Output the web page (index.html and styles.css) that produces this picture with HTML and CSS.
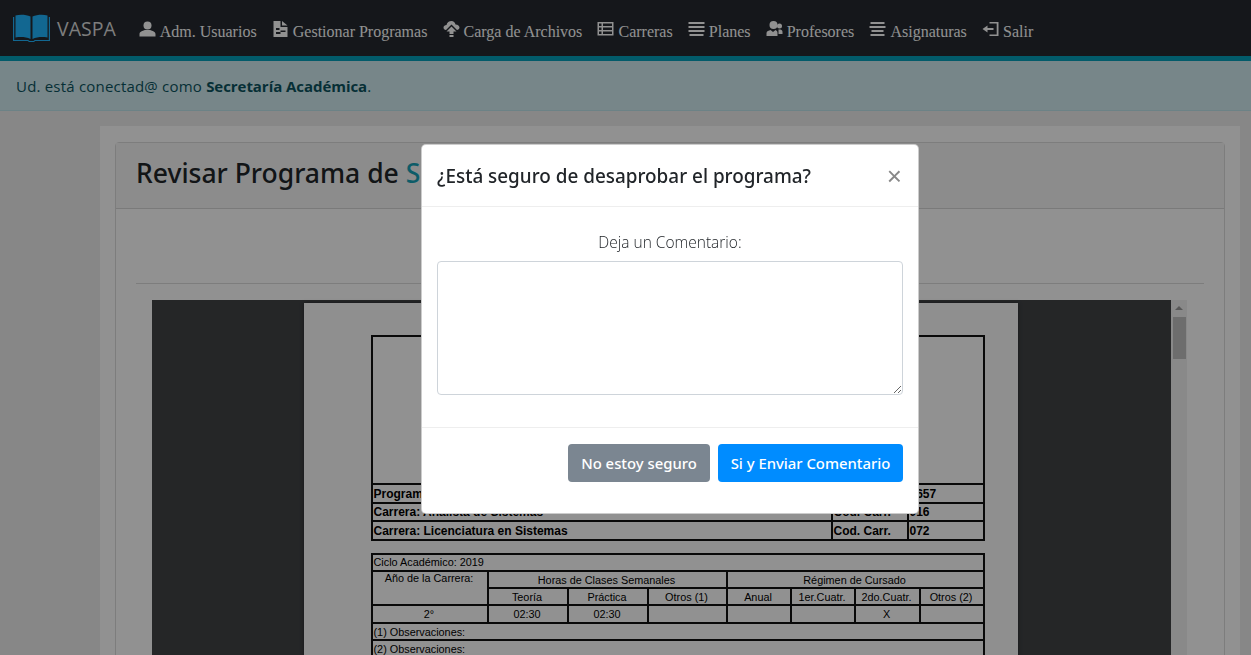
FILE: index.html
```html
<!DOCTYPE html>
<html lang="es">
<head>
<meta charset="utf-8">
<title>VASPA</title>
<link rel="stylesheet" href="styles.css">
</head>
<body>
<nav class="navbar">
  <a class="brand">
    <svg class="logo" viewBox="0 0 37 28"><path d="M2.500 1.500C7 .2 13 .5 17.500 2.500V25C13 23 8 22.500 2.500 23.500Z M19.500 2.500C24 .5 30 .2 34.500 1.500V23.500C29 22.500 24 23 19.500 25Z" fill="#20b5ff"/><path d="M.6 3V26.500H15C16 28 21 28 22 26.500H36.400V3" fill="none" stroke="#20b5ff" stroke-width="1.200"/></svg>
    <span>VASPA</span>
  </a>
  <ul class="menu">
    <li><svg class="ico" viewBox="0 0 16 16"><circle cx="8" cy="4.500" r="4"/><path d="M0 15.500V13C0 10.500 3 10 5.500 9H10.500C13 10 16 10.500 16 13V15.500Z"/></svg>Adm. Usuarios</li>
    <li><svg class="ico" viewBox="0 0 16 16"><path fill-rule="evenodd" d="M1 0H8V6H15V16H1ZM9.500 0 15 4.500H9.500ZM3.500 7V9H7V7ZM3.500 11V13H8V11H13V9.500H8V11Z"/></svg>Gestionar Programas</li>
    <li><svg class="ico" viewBox="0 0 16 16"><path d="M8 0C10 0 11.500 1.500 12 3.500 14.500 3.500 16 5 16 6.500 16 8 14.500 9 13.500 9L8 3.500 2.500 9C1 9 0 8 0 6.500 0 5 1.500 4 3 4 3.500 1.500 5.500 0 8 0ZM8 5.500 13 10.500H10V13H6V10.500H3ZM6 14H10V16H6Z"/></svg>Carga de Archivos</li>
    <li><svg class="ico" viewBox="0 0 16 16"><path fill-rule="evenodd" d="M0 1H16V14.500H0ZM1.500 2.500V5H4V2.500ZM5.500 2.500V5H14.500V2.500ZM1.500 6.500V9H4V6.500ZM5.500 6.500V9H14.500V6.500ZM1.500 10.500V13H4V10.500ZM5.500 10.500V13H14.500V10.500Z"/></svg>Carreras</li>
    <li><svg class="ico" viewBox="0 0 16 16"><path d="M0 1H16V3H0ZM0 5H16V7H0ZM0 9H16V11H0ZM1 13H15V15H1Z"/></svg>Planes</li>
    <li><svg class="ico" viewBox="0 0 16 16"><circle cx="7" cy="4" r="4"/><circle cx="13" cy="5" r="2.500"/><path d="M0 15V12C0 10 2.500 9.500 4 9L6.500 11 9 9C10 9.500 11 10 11 12V15ZM12 8.500H14C15.500 9 16 9.800 16 11V13H12Z"/></svg>Profesores</li>
    <li><svg class="ico" viewBox="0 0 16 16"><path d="M1 1H15V3H1ZM0 5H16V7H0ZM2 9H14V11H2ZM1 13H15V15H1Z"/></svg>Asignaturas</li>
    <li><svg class="ico" viewBox="0 0 16 16"><path d="M7 1H16V15H7V13.500H14.200V2.500H7ZM5 4.500V7H11V9H5V11.500L0 8Z"/></svg>Salir</li>
  </ul>
</nav>
<div class="notice"><span class="notice-text">Ud. está conectad@ como </span><strong>Secretaría Académica</strong>.</div>
<main class="wrap">
  <section class="card">
    <header class="card-head"><h1>Revisar Programa de <span class="accent">Sistemas Operativos</span></h1></header>
    <div class="card-body">
      <div class="spacer"></div>
      <hr class="rule">
      <div class="viewer">
        <div class="stage">
          <div class="sheet">
            <table class="doc doc-head">
              <colgroup><col class="c1"><col class="c2"><col class="c3"></colgroup>
              <tr class="tall"><td colspan="3"></td></tr>
              <tr><th>Programa: Sistemas Operativos</th><th>Cód. Mat.</th><th>0657</th></tr>
              <tr><th>Carrera: Analista de Sistemas</th><th>Cod. Carr.</th><th>016</th></tr>
              <tr><th>Carrera: Licenciatura en Sistemas</th><th>Cod. Carr.</th><th>072</th></tr>
            </table>
            <table class="doc doc-data">
              <colgroup><col class="d1"><col class="d2"><col class="d2"><col class="d3"><col class="d4"><col class="d5"><col class="d6"><col class="d7"></colgroup>
              <tr><td colspan="8" class="left">Ciclo Académico: 2019</td></tr>
              <tr><td rowspan="2" class="top">Año de la Carrera:</td><td colspan="3">Horas de Clases Semanales</td><td colspan="4">Régimen de Cursado</td></tr>
              <tr><td>Teoría</td><td>Práctica</td><td>Otros (1)</td><td>Anual</td><td>1er.Cuatr.</td><td>2do.Cuatr.</td><td>Otros (2)</td></tr>
              <tr><td>2°</td><td>02:30</td><td>02:30</td><td></td><td></td><td></td><td>X</td><td></td></tr>
              <tr><td colspan="8" class="left">(1) Observaciones:</td></tr>
              <tr><td colspan="8" class="left">(2) Observaciones:</td></tr>
            </table>
          </div>
        </div>
        <div class="scrollbar"><span class="arrow"></span><span class="thumb"></span></div>
      </div>
    </div>
  </section>
</main>
<div class="backdrop"></div>
<div class="modal">
  <div class="modal-head"><h2>¿Está seguro de desaprobar el programa?</h2><span class="close">×</span></div>
  <div class="modal-body">
    <label class="field-label" for="comentario">Deja un Comentario:</label>
    <textarea id="comentario" class="field"></textarea>
  </div>
  <div class="modal-foot">
    <button class="btn btn-gray">No estoy seguro</button>
    <button class="btn btn-blue">Si y Enviar Comentario</button>
  </div>
</div>
</body>
</html>
```
FILE: styles.css
```css
* { box-sizing: border-box; }
html, body { height: 100%; overflow: hidden; }
body { margin: 0; background: #eee; font-family: "Open Sans", "Noto Sans", sans-serif; color: #212529; }

.navbar { display: flex; align-items: center; height: 61px; padding: 0 0 0 13px; background: #252a31; border-bottom: 5px solid #05a0bb; }
.brand { display: flex; align-items: center; font-size: 19.500px; font-family: "Open Sans", sans-serif; }
.logo { width: 37px; height: 28px; margin-right: 7px; }
.brand span { color: #dcdcdc; }
.menu { display: flex; list-style: none; margin: 8px 0 0 23px; padding: 0; gap: 15.150px; font-family: "Liberation Serif", serif; font-size: 16px; }
.menu li { display: flex; align-items: center; white-space: nowrap; color: #fff; }
.ico { width: 17px; height: 16px; margin-right: 4px; margin-top: -6px; fill: currentColor; }

.notice { height: 50px; padding: 15px 16px 0; font-size: 15px; line-height: 20px; background: #d1ecf1; border-bottom: 1px solid #bee5eb; color: #0c5460; }
.notice-text { letter-spacing: .2px; }
.notice strong { font-weight: 700; letter-spacing: -.05px; }

.wrap { margin: 15px 11px 0 100px; padding: 16px 15px; background: #fff; }
.card { border: 1px solid #dcdcdc; border-radius: 4px; background: #fff; }
.card-head { height: 66px; padding: 0 20px 3px; display: flex; align-items: center; background: #f6f6f6; border-bottom: 1px solid #d6d6d6; }
h1 { margin: 0; font-family: "Noto Sans", sans-serif; font-size: 26.500px; font-weight: 500; line-height: 1.2; color: #212529; white-space: nowrap; }
.accent { color: #17a2b8; }
.card-body { padding: 0 20px; }
.spacer { height: 74px; }
.rule { margin: 0 0 16px; border: 0; border-top: 1px solid #dcdcdc; }

.viewer { display: flex; height: 800px; margin: 0 17px 0 16px; background: #414346; }
.stage { flex: 1; min-width: 0; padding: 3px 2px 0 0; display: flex; justify-content: center; }
.sheet { width: 714px; height: 100%; padding: 32px 33px 0 67px; background: #fbfbfb; box-shadow: 0 0 4px rgba(0,0,0,.4); }
.scrollbar { width: 16px; display: flex; flex-direction: column; align-items: center; background: #f1f1f1; }
.arrow { width: 0; height: 0; margin-top: 6px; border: 4px solid transparent; border-top: 0; border-bottom: 4px solid #999; }
.thumb { width: 13px; height: 42px; margin-top: 7px; background: #c0c0c0; }

.doc { width: 612px; table-layout: fixed; border-collapse: collapse; font-family: "Liberation Sans", sans-serif; font-size: 10.850px; color: #000; background: #fff; }
.doc td, .doc th { border: 2px solid #111; padding: 0 2px 0 1px; overflow: hidden; white-space: nowrap; }
.doc-head { height: 204px; font-size: 12px; }
.doc-head th { text-align: left; height: 18.500px; padding-top: 1px; }
.tall td { height: 148px; }
.c1 { width: 460px; } .c2 { width: 76px; } .c3 { width: 76px; }
.doc-data { margin-top: 12px; }
.doc-data td { height: 17.300px; text-align: center; padding-top: .5px; }
.doc-data td.left { text-align: left; }
.doc-data td.top { vertical-align: top; }
.d1 { width: 116px; } .d2 { width: 80px; } .d3 { width: 79px; } .d4 { width: 64px; } .d5 { width: 64px; } .d6 { width: 65px; } .d7 { width: 64px; }

.backdrop { position: fixed; inset: 0; background: rgba(0,0,0,.43); }
.modal { position: absolute; left: 421px; top: 144px; width: 498px; height: 370px; background: #fff; border: 1px solid rgba(0,0,0,.2); border-radius: 5px; display: flex; flex-direction: column; }
.modal-head { display: flex; justify-content: space-between; align-items: flex-start; height: 62px; padding: 17px 16px 0 15px; border-bottom: 1px solid #eee; }
h2 { margin: 0; font-family: "Noto Sans", sans-serif; font-size: 18.900px; font-weight: 500; line-height: 1.5; color: #212529; white-space: nowrap; }
.close { margin-top: -1px; font-family: "Liberation Sans", sans-serif; font-size: 26px; line-height: 30px; color: #888; font-weight: 400; }
.modal-body { flex: 1; display: flex; flex-direction: column; padding: 24px 15px 0; border-bottom: 1px solid #eee; }
.field-label { text-align: center; font-size: 15.500px; font-weight: 300; line-height: 22px; color: #212529; margin-bottom: 8px; }
.field { width: 466px; height: 134px; border: 1px solid #ced4da; border-radius: 4px; background: #fff; }
.modal-foot { display: flex; justify-content: flex-end; gap: 8px; height: 85px; padding: 16px 15px 0; }
.btn { height: 38px; border: 0; border-radius: 4px; color: #fff; font-family: "Noto Sans", sans-serif; font-size: 14.850px; font-weight: 500; }
.btn-gray { width: 142px; background: #7b8691; }
.btn-blue { width: 185px; background: #008cff; }
```
